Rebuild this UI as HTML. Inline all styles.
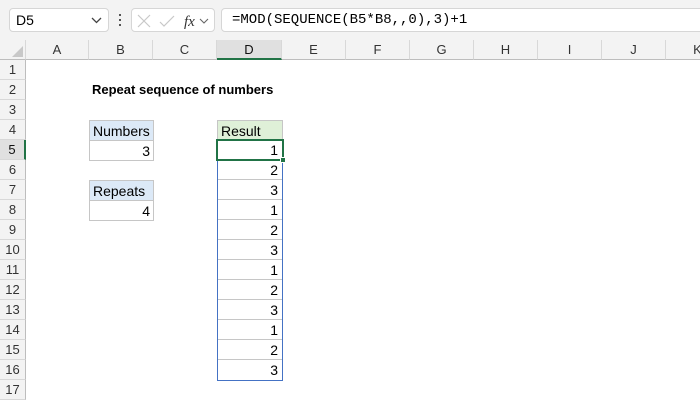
<!DOCTYPE html><html><head><style>
body{margin:0;width:700px;height:400px;background:#fff;font-family:"Liberation Sans",Arial,sans-serif;position:relative;overflow:hidden}
.a{position:absolute;box-sizing:border-box}
.top{left:0;top:0;width:700px;height:40px;background:#f3f3f3}
.box{background:#fff;border:1px solid #d6d6d6;border-radius:4px;top:8px;height:24px}
.ch{top:40px;height:20px;background:#f3f3f3;border-right:1px solid #d8d8d8;border-bottom:1px solid #bdbdbd;font-size:13px;color:#333;text-align:center;line-height:20px}
.rh{left:0;width:26px;height:20px;background:#f3f3f3;border-bottom:1px solid #d8d8d8;border-right:1px solid #bdbdbd;font-size:13px;color:#333;text-align:center;line-height:20px}
.c{font-size:14px;line-height:20px;color:#000;padding:0 3px;height:21px;border:1px solid #c6c6c6}
.r{text-align:right}
</style></head><body>
<div class="a top"></div>
<div class="a box" style="left:9px;width:100px;font-size:14px;line-height:22px;padding-left:6px">D5<svg style="position:absolute;right:6px;top:8px" width="11" height="7"><path d="M1 1L5.5 5.5L10 1" stroke="#444" fill="none" stroke-width="1.3"/></svg></div>
<div class="a" style="left:119px;top:14px;width:2px;height:2px;background:#555;box-shadow:0 5px #555,0 10px #555"></div>
<div class="a box" style="left:131px;width:84px"><svg width="84" height="24"><path d="M6 6L18 18M18 6L6 18" stroke="#c8c8c8" stroke-width="1.2"/><path d="M28 13L32 17L42 7" stroke="#c8c8c8" stroke-width="1.2" fill="none"/><text x="52" y="17" font-family="Liberation Serif" font-style="italic" font-size="15" fill="#333">fx</text><path d="M68 10L72 14L76 10" stroke="#666" fill="none" stroke-width="1.1"/></svg></div>
<div class="a box" style="left:221px;width:490px;font-family:'Liberation Mono',monospace;font-size:14px;line-height:22px;padding-left:10px">=MOD(SEQUENCE(B5*B8,,0),3)+1</div>
<div class="a ch" style="left:0;width:26px"></div>
<svg class="a" style="left:12px;top:46px" width="12" height="12"><path d="M11 0L11 11L0 11Z" fill="#c8c8c8"/></svg>
<div class="a ch" style="left:26px;width:63px">A</div>
<div class="a ch" style="left:89px;width:64px">B</div>
<div class="a ch" style="left:153px;width:64px">C</div>
<div class="a ch" style="left:217px;width:65px;background:#e0e0e0;border-bottom:2px solid #217346;color:#111">D</div>
<div class="a ch" style="left:282px;width:64px">E</div>
<div class="a ch" style="left:346px;width:64px">F</div>
<div class="a ch" style="left:410px;width:64px">G</div>
<div class="a ch" style="left:474px;width:64px">H</div>
<div class="a ch" style="left:538px;width:64px">I</div>
<div class="a ch" style="left:602px;width:64px">J</div>
<div class="a ch" style="left:666px;width:64px">K</div>
<div class="a rh" style="top:60px">1</div><div class="a rh" style="top:80px">2</div><div class="a rh" style="top:100px">3</div><div class="a rh" style="top:120px">4</div>
<div class="a rh" style="top:140px;background:#e0e0e0;border-right:2px solid #217346;color:#111">5</div>
<div class="a rh" style="top:160px">6</div><div class="a rh" style="top:180px">7</div><div class="a rh" style="top:200px">8</div><div class="a rh" style="top:220px">9</div><div class="a rh" style="top:240px">10</div><div class="a rh" style="top:260px">11</div><div class="a rh" style="top:280px">12</div><div class="a rh" style="top:300px">13</div><div class="a rh" style="top:320px">14</div><div class="a rh" style="top:340px">15</div><div class="a rh" style="top:360px">16</div><div class="a rh" style="top:380px">17</div>
<div class="a" style="left:92px;top:80px;font-size:13px;font-weight:bold;line-height:20px">Repeat sequence of numbers</div>
<div class="a c" style="left:89px;top:120px;width:65px;background:#dce9f7">Numbers</div>
<div class="a c r" style="left:89px;top:140px;width:65px">3</div>
<div class="a c" style="left:89px;top:180px;width:65px;background:#dce9f7">Repeats</div>
<div class="a c r" style="left:89px;top:200px;width:65px">4</div>
<div class="a c" style="left:217px;top:120px;width:66px;background:#dff0d8">Result</div>
<div class="a" style="left:217px;top:140px;width:66px;height:241px;border:1px solid #4472c4;box-sizing:border-box"></div>
<div class="a" style="left:218px;top:140px;width:64px;font-size:14px;line-height:20px;text-align:right">
<div style="padding-right:4px;height:19px;border-bottom:1px solid #c6c6c6">1</div><div style="padding-right:4px;height:19px;border-bottom:1px solid #c6c6c6">2</div><div style="padding-right:4px;height:19px;border-bottom:1px solid #c6c6c6">3</div><div style="padding-right:4px;height:19px;border-bottom:1px solid #c6c6c6">1</div><div style="padding-right:4px;height:19px;border-bottom:1px solid #c6c6c6">2</div><div style="padding-right:4px;height:19px;border-bottom:1px solid #c6c6c6">3</div><div style="padding-right:4px;height:19px;border-bottom:1px solid #c6c6c6">1</div><div style="padding-right:4px;height:19px;border-bottom:1px solid #c6c6c6">2</div><div style="padding-right:4px;height:19px;border-bottom:1px solid #c6c6c6">3</div><div style="padding-right:4px;height:19px;border-bottom:1px solid #c6c6c6">1</div><div style="padding-right:4px;height:19px;border-bottom:1px solid #c6c6c6">2</div><div style="padding-right:4px;height:19px">3</div></div>
<div class="a" style="left:216px;top:139px;width:68px;height:22px;border:2px solid #217346"></div>
<div class="a" style="left:280px;top:157px;width:6px;height:6px;background:#217346;border:1px solid #fff"></div>
</body></html>
